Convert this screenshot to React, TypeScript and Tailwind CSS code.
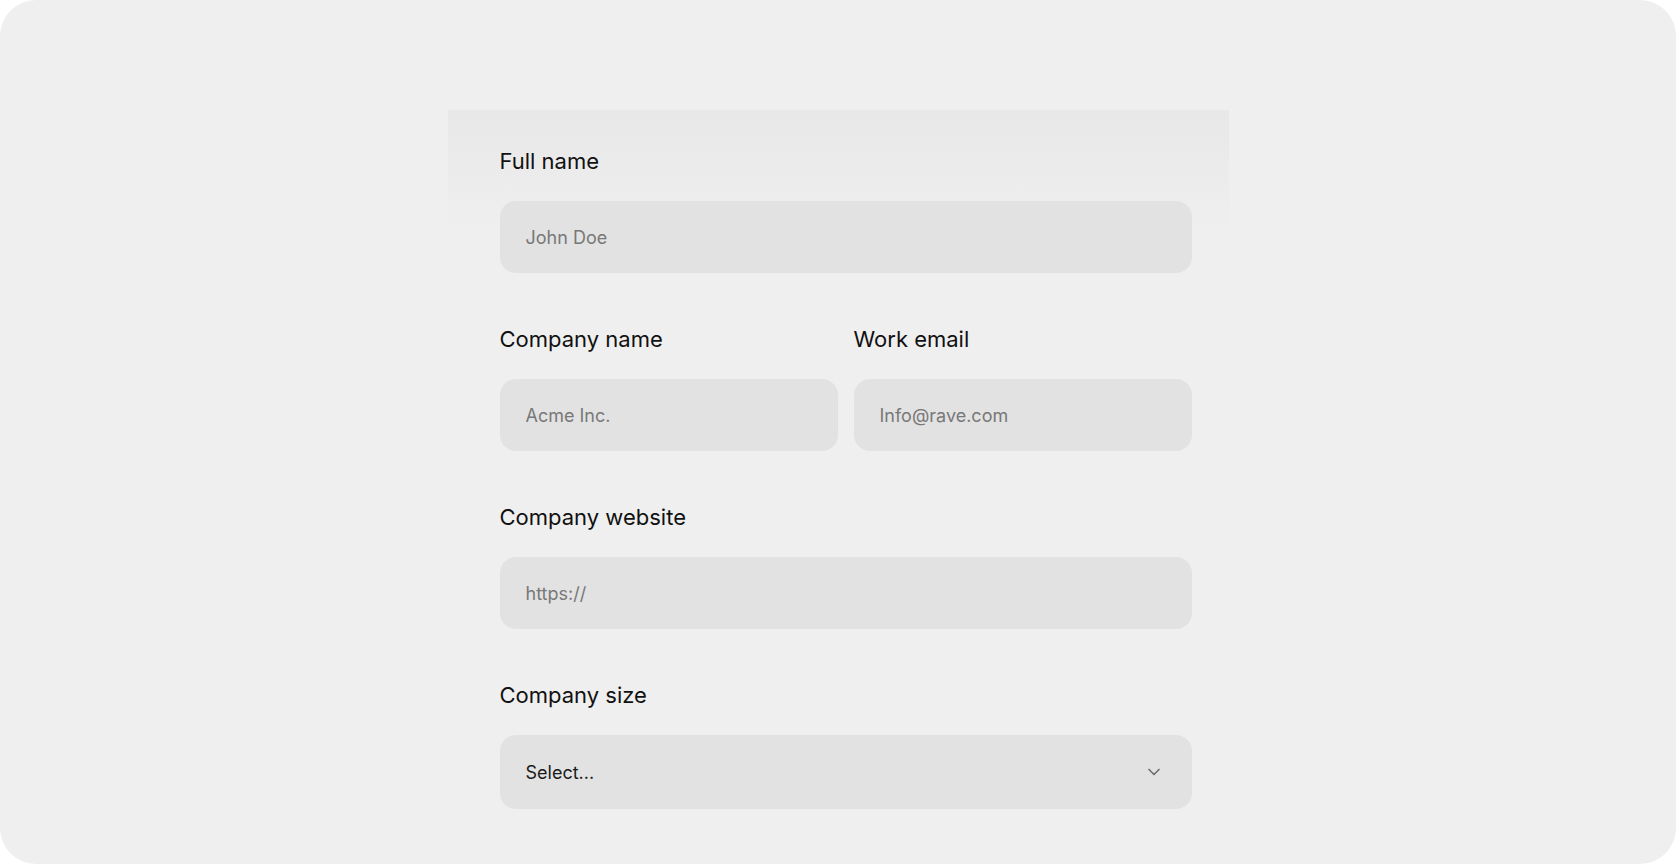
import React from 'react';
import { ChevronDown } from 'lucide-react';

const fieldClass =
  'h-[72px] w-full rounded-2xl bg-[#e2e2e2] pl-[26px] pr-6 text-[18px] text-[#1a1a1a] outline-none placeholder:text-[#787878]';

const Label: React.FC<{ htmlFor: string; children: React.ReactNode }> = ({ htmlFor, children }) => (
  <label htmlFor={htmlFor} className="mb-[26px] block text-[22px] leading-7 text-[#111111]">
    {children}
  </label>
);

export default function App() {
  return (
    <div className="h-[864px] w-full bg-white font-['Inter','Liberation_Sans',sans-serif]">
      <div className="h-full w-full overflow-hidden rounded-[36px] bg-[#efefef]">
        <form
          className="mx-auto mt-[110px] flex w-[781px] flex-col gap-[52px] bg-[linear-gradient(to_bottom,#e8e8e8,#eaeaea_35%,#efefef)] bg-[length:100%_120px] bg-no-repeat pl-[52px] pr-[37px] pt-[37px]"
          onSubmit={(e) => e.preventDefault()}
        >
          <div>
            <Label htmlFor="full-name">Full name</Label>
            <input id="full-name" placeholder="John Doe" className={fieldClass} />
          </div>

          <div className="grid grid-cols-2 gap-4">
            <div>
              <Label htmlFor="company-name">Company name</Label>
              <input id="company-name" placeholder="Acme Inc." className={fieldClass} />
            </div>
            <div>
              <Label htmlFor="work-email">Work email</Label>
              <input id="work-email" type="email" placeholder="Info@rave.com" className={fieldClass} />
            </div>
          </div>

          <div>
            <Label htmlFor="company-website">Company website</Label>
            <input id="company-website" placeholder="https://" className={fieldClass} />
          </div>

          <div>
            <Label htmlFor="company-size">Company size</Label>
            <button
              id="company-size"
              type="button"
              className="flex h-[74px] w-full items-center justify-between rounded-2xl bg-[#e2e2e2] pl-[26px] pr-[28px] text-[18px] text-[#1a1a1a]"
            >
              <span>Select...</span>
              <ChevronDown className="h-5 w-5 text-[#6e6e6e]" strokeWidth={2} />
            </button>
          </div>
        </form>
      </div>
    </div>
  );
}
